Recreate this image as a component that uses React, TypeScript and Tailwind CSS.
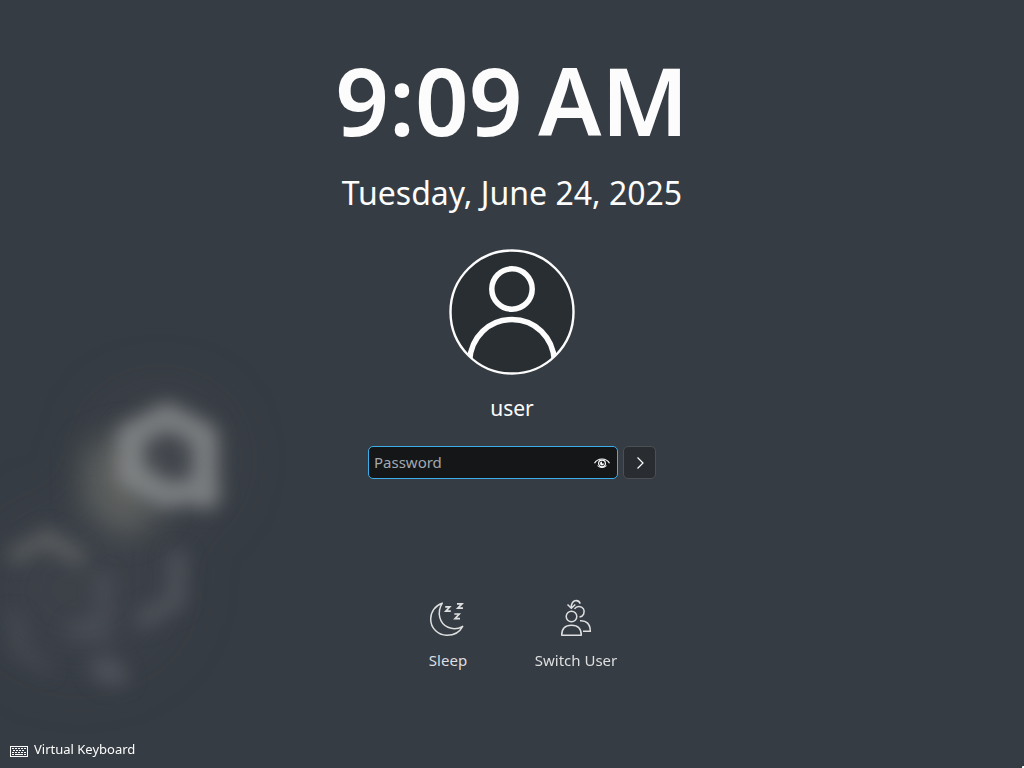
import { useState } from "react";

function Wallpaper() {
  return (
    <svg
      className="pointer-events-none absolute bottom-0 left-0 -z-10"
      width="400"
      height="448"
      viewBox="0 320 400 448"
      fill="none"
      aria-hidden="true"
    >
      <defs>
        <filter id="soft" x="-200" y="200" width="700" height="700" filterUnits="userSpaceOnUse" colorInterpolationFilters="sRGB">
          <feGaussianBlur stdDeviation="15" />
        </filter>
        <filter id="haze" x="-200" y="200" width="700" height="700" filterUnits="userSpaceOnUse" colorInterpolationFilters="sRGB">
          <feGaussianBlur stdDeviation="32" />
        </filter>
        <filter id="crisp" x="-200" y="200" width="700" height="700" filterUnits="userSpaceOnUse" colorInterpolationFilters="sRGB">
          <feGaussianBlur stdDeviation="9" />
        </filter>
      </defs>
      <g filter="url(#haze)" fill="#5a5a62">
        <ellipse cx="160" cy="460" rx="60" ry="60" opacity="0.34" />
        <ellipse cx="80" cy="590" rx="95" ry="80" opacity="0.2" />
      </g>
      <g filter="url(#soft)" fill="#74766f">
        <path d="M84 450L130 430L150 495L165 510L125 538L84 508Z" opacity="0.58" />
      </g>
      <g filter="url(#crisp)" fill="#6c6e6c">
        <path d="M4 553L48 527L88 553L80 567L44 549L16 564Z" opacity="0.58" />
        <path d="M168 550L188 552L186 606L142 631L134 616L166 594Z" fill="#6a6c72" opacity="0.4" />
        <path d="M94 570L114 574L110 645L70 640L64 625L96 610Z" fill="#6a6a74" opacity="0.24" />
        <path d="M95 656L118 658L132 682L110 688L88 674Z" fill="#6a6a74" opacity="0.42" />
        <path d="M6 610L22 612L30 645L54 670L48 678L10 655Z" fill="#6a6a74" opacity="0.2" />
      </g>
      <g filter="url(#crisp)">
        <path
          d="M167 416L205 436V478L207 496L192 491L167 495L130 475V436Z"
          fill="#6c706f"
          fillOpacity="0.1"
          stroke="#8a8c8e"
          strokeWidth="26"
          strokeLinejoin="round"
          opacity="0.8"
        />
      </g>
    </svg>
  );
}

function Avatar() {
  return (
    <svg width="126" height="126" viewBox="0 0 126 126" fill="none" role="img" aria-label="user">
      <defs>
        <clipPath id="face">
          <circle cx="63" cy="63" r="62" />
        </clipPath>
      </defs>
      <circle cx="63" cy="63" r="61.5" fill="#292e32" />
      <g clipPath="url(#face)" stroke="#fcfcfc" strokeWidth="5.5">
        <circle cx="63" cy="40" r="20.2" />
        <path d="M20.500 112C22 88 40 70.500 63 70.500S104 88 105.500 112" />
      </g>
      <circle cx="63" cy="63" r="61.500" stroke="#fcfcfc" strokeWidth="2.4" />
    </svg>
  );
}

function EyeIcon() {
  return (
    <svg width="16" height="16" viewBox="0 0 16 16" fill="none" stroke="#fcfcfc" aria-hidden="true">
      <path d="M.5 8.300C2.200 5.300 4.800 4 8 4S13.800 5.300 15.500 8.300" strokeWidth="1.200" />
      <path d="M3.500 10.800C6 13 10 13 12.500 10.800" strokeWidth="1" />
      <circle cx="8" cy="8.500" r="3.400" strokeWidth="1.200" />
      <path d="M8 6.500V8.500H10A2 2 0 1 1 8 6.500Z" fill="#fcfcfc" stroke="none" />
    </svg>
  );
}

function SleepIcon() {
  return (
    <svg width="48" height="48" viewBox="0 0 48 48" fill="none" stroke="currentColor" aria-hidden="true">
      <path
        d="M18.300 9.200C11 11.500 6.700 18 6.700 25A16 16 0 0 0 23 41.200C30 41.200 35.800 37.800 38.700 32.300C34 35 29 35.500 24 33.300C15.500 29.500 12.500 18.500 18.300 9.200Z"
        strokeWidth="1.500"
        strokeLinejoin="round"
      />
      <path
        d="M21.200 12.800H25.800L21.800 17.200H26.800M33 9.800H38L33.800 14.200H39M30.300 20H35.200L31 24.700H36"
        strokeWidth="1.700"
      />
    </svg>
  );
}

function SwitchUserIcon() {
  return (
    <svg width="48" height="48" viewBox="0 0 48 48" fill="none" stroke="currentColor" strokeWidth="1.500" aria-hidden="true">
      <circle cx="19.500" cy="22.500" r="5.300" />
      <path d="M9.700 41.300C9.700 34.500 13.500 31.300 19.500 31.300S29.300 34.500 29.300 41.300Z" strokeLinejoin="round" />
      <path d="M22.500 14.800A5.300 5.300 0 1 1 27.500 23" />
      <path d="M28 26.800C34.500 26.300 38.300 30 38.300 37.200H31" />
      <path d="M28.300 9.600C26.500 5.200 19.300 5.200 19.300 13.500M15.500 10.500L19.300 14.300L23.300 10.500" />
    </svg>
  );
}

function KeyboardIcon() {
  return (
    <svg width="18" height="12" viewBox="0 0 18 12" fill="none" stroke="#fcfcfc" shapeRendering="crispEdges" aria-hidden="true">
      <path d="M.5 .5H17.500V10.500H.5Z" />
      <path d="M2 2.500H16M3 4.500H15M2 6.500H16" strokeDasharray="2 1" />
      <path d="M2 8.500H4M5 8.500H13M14 8.500H16" />
    </svg>
  );
}

export default function App() {
  const [visible, setVisible] = useState(false);

  return (
    <main className="relative isolate flex min-h-screen flex-col items-center overflow-hidden bg-[#363c43] pt-[52px] font-['Noto_Sans',sans-serif] text-[#fcfcfc]">
      <Wallpaper />

      <time dateTime="2025-06-24T09:09" className="flex flex-col items-center">
        <span className="text-[94px] leading-[97px] font-semibold">9:09&#8239;AM</span>
        <span className="mt-6 text-[32px] leading-10">Tuesday, June 24, 2025</span>
      </time>

      <section className="mt-9 flex flex-col items-center">
        <Avatar />
        <h1 className="mt-[19px] text-[21px] leading-7">user</h1>
        <form className="mt-6 flex gap-[5px]" onSubmit={(event) => event.preventDefault()}>
          <div className="flex h-[33px] w-[250px] items-center rounded-[5px] border border-[#3daee9] bg-[#141618] pr-[7px] pl-[5px]">
            <input
              type={visible ? "text" : "password"}
              placeholder="Password"
              aria-label="Password"
              className="min-w-0 flex-1 bg-transparent pb-px text-[15px] leading-5 outline-none placeholder:text-[#a1a9b1]"
            />
            <button type="button" aria-label="Show password" onClick={() => setVisible(!visible)}>
              <EyeIcon />
            </button>
          </div>
          <button
            type="submit"
            aria-label="Unlock"
            className="flex size-[33px] items-center justify-center rounded-[5px] border border-[#4b5055] bg-[#292c30]"
          >
            <svg width="16" height="16" viewBox="0 0 16 16" fill="none" stroke="#fcfcfc" strokeWidth="1.200" aria-hidden="true">
              <path d="M5.500 2.500L11 8L5.500 13.500" />
            </svg>
          </button>
        </form>
      </section>

      <nav aria-label="Session" className="mt-[115px] flex text-[15px] leading-5 text-[#dddfe0]">
        <button type="button" className="flex w-32 flex-col items-center gap-2">
          <SleepIcon />
          Sleep
        </button>
        <button type="button" className="flex w-32 flex-col items-center gap-2">
          <SwitchUserIcon />
          Switch User
        </button>
      </nav>

      <footer className="mt-auto self-start px-2.5 pb-2.5">
        <button type="button" className="flex items-end gap-1.5 text-[13px] leading-[18px]">
          <KeyboardIcon />
          Virtual Keyboard
        </button>
      </footer>

      <span className="absolute right-0 bottom-0 size-0.5 rounded-tl-[1px] bg-[#fcfcfc]" aria-hidden="true" />
    </main>
  );
}
